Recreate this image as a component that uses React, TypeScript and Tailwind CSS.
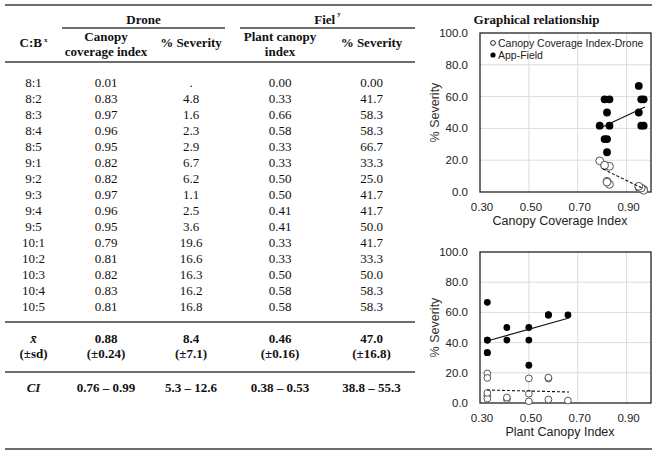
const rows = [
  ["8:1", "0.01", ".", "0.00", "0.00"],
  ["8:2", "0.83", "4.8", "0.33", "41.7"],
  ["8:3", "0.97", "1.6", "0.66", "58.3"],
  ["8:4", "0.96", "2.3", "0.58", "58.3"],
  ["8:5", "0.95", "2.9", "0.33", "66.7"],
  ["9:1", "0.82", "6.7", "0.33", "33.3"],
  ["9:2", "0.82", "6.2", "0.50", "25.0"],
  ["9:3", "0.97", "1.1", "0.50", "41.7"],
  ["9:4", "0.96", "2.5", "0.41", "41.7"],
  ["9:5", "0.95", "3.6", "0.41", "50.0"],
  ["10:1", "0.79", "19.6", "0.33", "41.7"],
  ["10:2", "0.81", "16.6", "0.33", "33.3"],
  ["10:3", "0.82", "16.3", "0.50", "50.0"],
  ["10:4", "0.83", "16.2", "0.58", "58.3"],
  ["10:5", "0.81", "16.8", "0.58", "58.3"],
];

const cols = "grid grid-cols-[57px_88px_82px_96px_87px]";

type ChartProps = {
  top: number;
  height: number;
  boxTop: number;
  boxBottom: number;
  xKey: number;
  xLabel: string;
  solid: [number, number, number, number];
  dashed: [number, number, number, number];
  r: number;
  legend?: boolean;
};

function Chart({ top, height, boxTop, boxBottom, xKey, xLabel, solid, dashed, r, legend }: ChartProps) {
  const left = 480;
  const right = 651;
  const px = (v: number) => left + ((v - 0.3) * (right - left)) / 0.7;
  const py = (v: number) => boxBottom - (v * (boxBottom - boxTop)) / 100;
  const pts = rows.slice(1);
  return (
    <svg
      width={237}
      height={height}
      viewBox={`415 ${top} 237 ${height}`}
      className="block font-['Liberation_Sans',Arial,sans-serif]"
    >
      {[0.5, 0.7, 0.9].map((v) => (
        <line key={v} x1={px(v)} x2={px(v)} y1={boxTop} y2={boxBottom} stroke="#dcdcdc" strokeWidth={1} />
      ))}
      {[20, 40, 60, 80].map((v) => (
        <line key={v} x1={left} x2={right} y1={py(v)} y2={py(v)} stroke="#dcdcdc" strokeWidth={1} />
      ))}
      <rect x={left} y={boxTop} width={right - left} height={boxBottom - boxTop} fill="none" stroke="#222" strokeWidth={1.3} />
      {[0, 20, 40, 60, 80, 100].map((v) => (
        <text key={v} x={468} y={py(v) + 4} textAnchor="end" fontSize={11.5} fill="#222">
          {v.toFixed(1)}
        </text>
      ))}
      {[0.3, 0.5, 0.7, 0.9].map((v) => (
        <text key={v} x={px(v) + 2} y={boxBottom + 19} textAnchor="middle" fontSize={11.5} fill="#222">
          {v.toFixed(2)}
        </text>
      ))}
      <text x={560} y={boxBottom + 33} textAnchor="middle" fontSize={12.5} fill="#222">
        {xLabel}
      </text>
      <text
        x={0}
        y={0}
        transform={`translate(439 ${(boxTop + boxBottom) / 2}) rotate(-90)`}
        textAnchor="middle"
        fontSize={12.5}
        fill="#3a3030"
      >
        % Severity
      </text>
      {pts.map((p, i) => (
        <circle key={"o" + i} cx={px(parseFloat(p[xKey]))} cy={py(parseFloat(p[2]))} r={r} fill="#fff" stroke="#555" strokeWidth={1} />
      ))}
      {pts.map((p, i) => (
        <circle key={"f" + i} cx={px(parseFloat(p[xKey]))} cy={py(parseFloat(p[4]))} r={r} fill="#000" />
      ))}
      <line x1={solid[0]} y1={solid[1]} x2={solid[2]} y2={solid[3]} stroke="#111" strokeWidth={1.2} />
      <line x1={dashed[0]} y1={dashed[1]} x2={dashed[2]} y2={dashed[3]} stroke="#111" strokeWidth={1.1} strokeDasharray="3 2" />
      {legend && (
        <g>
          <circle cx={493} cy={43} r={2.4} fill="#fff" stroke="#222" strokeWidth={1} />
          <text x={498} y={47} fontSize={10.5} fill="#222">
            Canopy Coverage Index-Drone
          </text>
          <circle cx={493} cy={55} r={2.6} fill="#000" />
          <text x={498} y={59} fontSize={10.5} fill="#222">
            App-Field
          </text>
        </g>
      )}
    </svg>
  );
}

export default function App() {
  return (
    <div className="w-[660px] h-[451px] bg-white pt-[4px] pl-[5px] pr-[8px] text-[#111] font-['Liberation_Serif',serif]">
      <div className="border-t-2 border-b-2 border-[#6e6e6e] h-[446px] flex">
        {/* table */}
        <div className="w-[410px] text-[13px] leading-[16px]">
          <div className={`${cols} border-b-2 border-[#6e6e6e] font-bold`}>
            <div />
            <div className="col-span-2 mr-[7px] h-[23px] pt-[6px] text-center border-b-2 border-[#6e6e6e]">Drone</div>
            <div className="col-span-2 ml-[8px] h-[23px] pt-[6px] text-center border-b-2 border-[#6e6e6e]">
              Fiel<sup className="text-[7px] ml-[2px] align-[5px]">y</sup>
            </div>
            <div className="h-[32px] flex items-center justify-center pb-[4px]">
              C:B<sup className="text-[7px] ml-[2px] align-[4px]">x</sup>
            </div>
            <div className="h-[32px] text-center leading-[15px]">
              Canopy
              <br />
              coverage index
            </div>
            <div className="h-[32px] flex items-center justify-center pb-[4px]">% Severity</div>
            <div className="h-[32px] text-center leading-[15px]">
              Plant canopy
              <br />
              index
            </div>
            <div className="h-[32px] flex items-center justify-center pb-[4px]">% Severity</div>
          </div>
          <div className="pt-[12px] pb-[6px] border-b-2 border-[#6e6e6e]">
            {rows.map((r) => (
              <div key={r[0]} className={`${cols} text-center`}>
                {r.map((c, i) => (
                  <div key={i}>{c}</div>
                ))}
              </div>
            ))}
          </div>
          <div className={`${cols} text-center font-bold leading-[15px] pt-[8px] pb-[10px] border-b-2 border-[#6e6e6e]`}>
            <div>
              <i>x̄</i>
              <br />
              (±sd)
            </div>
            <div>
              0.88
              <br />
              (±0.24)
            </div>
            <div>
              8.4
              <br />
              (±7.1)
            </div>
            <div>
              0.46
              <br />
              (±0.16)
            </div>
            <div>
              47.0
              <br />
              (±16.8)
            </div>
          </div>
          <div className={`${cols} text-center font-bold pt-[7px]`}>
            <div>
              <i>CI</i>
            </div>
            <div>0.76 – 0.99</div>
            <div>5.3 – 12.6</div>
            <div>0.38 – 0.53</div>
            <div>38.8 – 55.3</div>
          </div>
        </div>
        {/* charts */}
        <div className="w-[237px]">
          <div className="h-[22px] pt-[6px] text-center text-[13px] leading-[16px] font-bold pl-[6px]">
            Graphical relationship
          </div>
          <Chart
            top={28}
            height={200}
            boxTop={33}
            boxBottom={192}
            xKey={1}
            xLabel="Canopy Coverage Index"
            solid={[598, 129, 645, 107]}
            dashed={[603, 169, 642, 188]}
            r={3.9}
            legend
          />
          <Chart
            top={228}
            height={214}
            boxTop={252}
            boxBottom={403}
            xKey={3}
            xLabel="Plant Canopy Index"
            solid={[487, 341, 569, 318]}
            dashed={[487, 390, 569, 392]}
            r={3.4}
          />
        </div>
      </div>
    </div>
  );
}
